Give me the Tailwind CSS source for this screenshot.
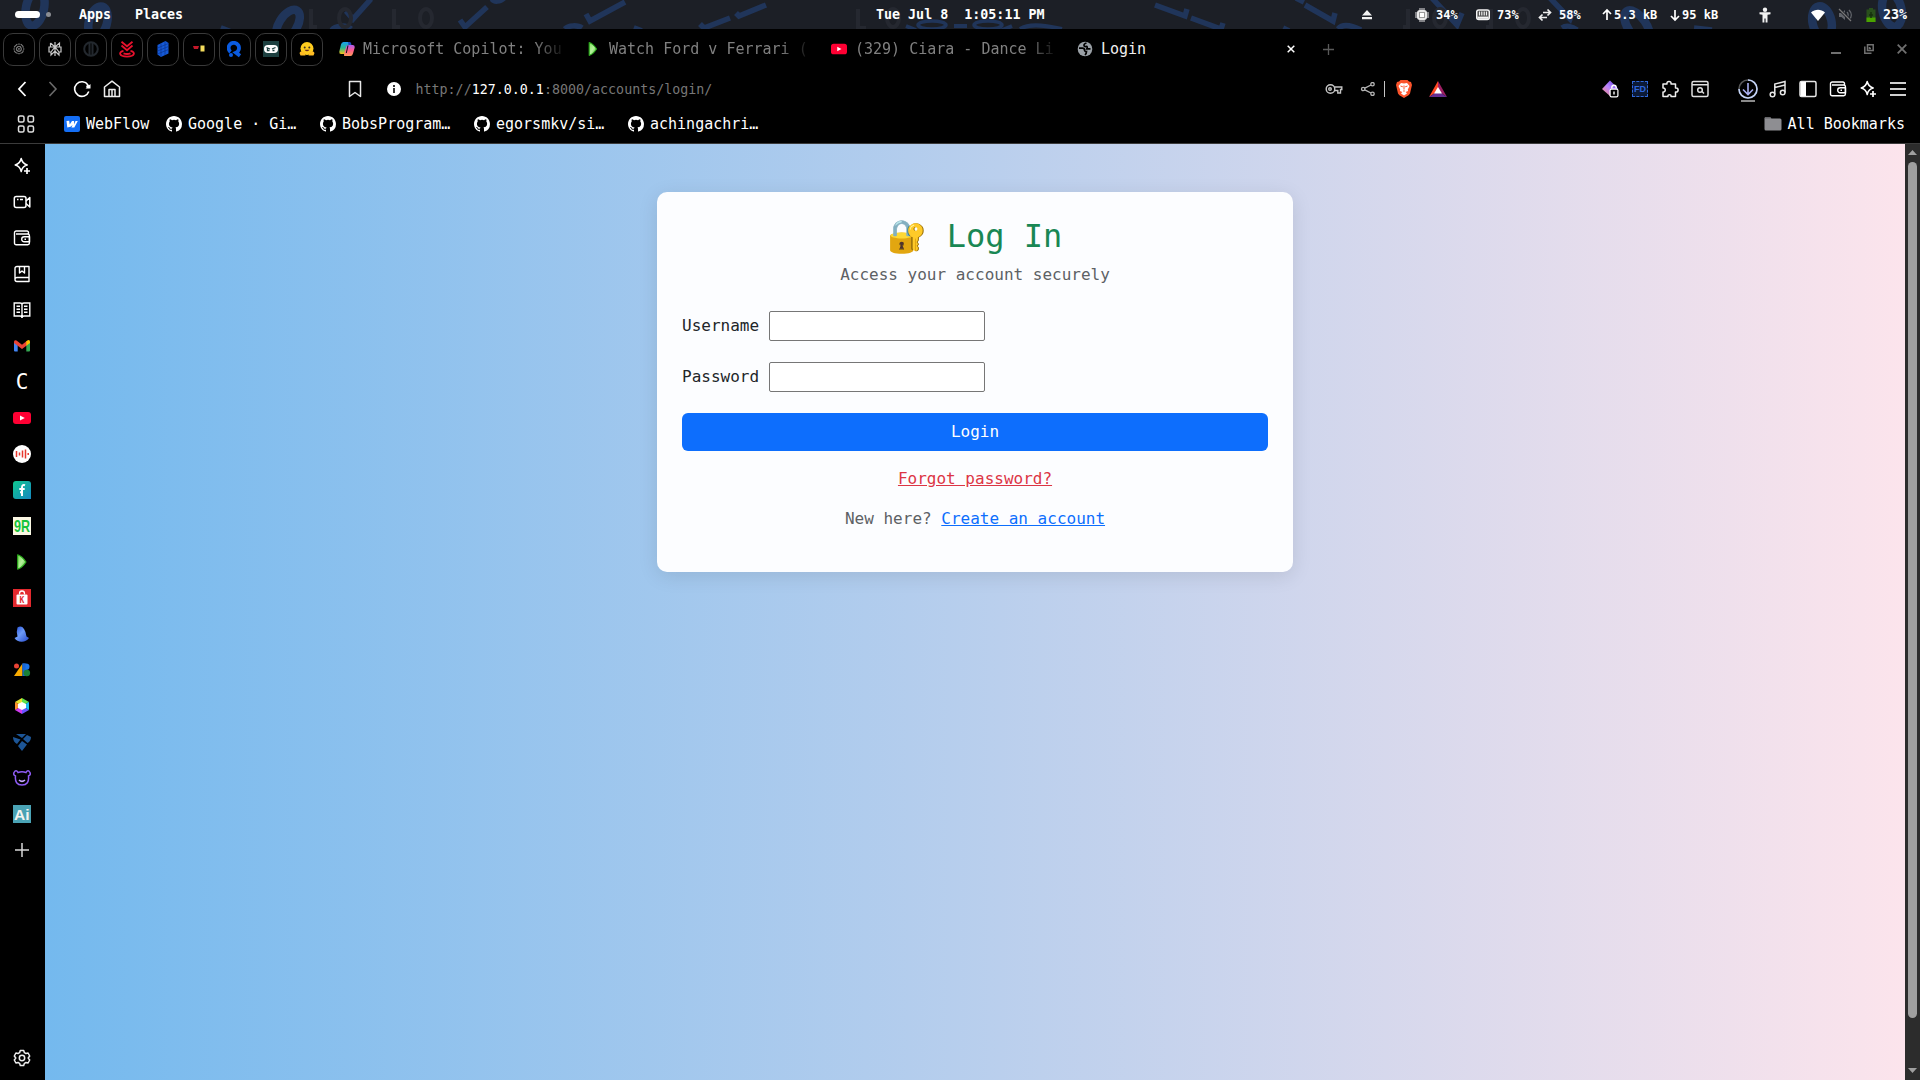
<!DOCTYPE html>
<html lang="en">
<head>
<meta charset="utf-8">
<title>Login</title>
<script src="https://cdn.jsdelivr.net/npm/@tailwindcss/browser@4"></script>
</head>
<body class="w-[1920px] h-[1080px] overflow-hidden bg-black text-white font-['DejaVu_Sans_Mono',monospace] flex flex-col">
<svg class="absolute w-0 h-0">
  <defs><linearGradient id="pg" x1="0" y1="0" x2="1" y2="1"><stop offset="0" stop-color="#7ee05a"/><stop offset=".5" stop-color="#b5f29c"/><stop offset="1" stop-color="#35b31c"/></linearGradient></defs>
  <symbol id="gh" viewBox="0 0 16 16"><path fill="#fff" d="M8 0C3.58 0 0 3.58 0 8c0 3.54 2.29 6.53 5.47 7.59.4.07.55-.17.55-.38 0-.19-.01-.82-.01-1.49-2.01.37-2.53-.49-2.69-.94-.09-.23-.48-.94-.82-1.13-.28-.15-.68-.52-.01-.53.63-.01 1.08.58 1.23.82.72 1.21 1.87.87 2.33.66.07-.52.28-.87.51-1.07-1.78-.2-3.64-.89-3.64-3.95 0-.87.31-1.59.82-2.15-.08-.2-.36-1.02.08-2.12 0 0 .67-.21 2.2.82a7.6 7.6 0 0 1 4 0c1.53-1.04 2.2-.82 2.2-.82.44 1.1.16 1.92.08 2.12.51.56.82 1.27.82 2.15 0 3.07-1.87 3.75-3.65 3.95.29.25.54.73.54 1.48 0 1.07-.01 1.93-.01 2.2 0 .21.15.46.55.38A8 8 0 0 0 16 8c0-4.42-3.58-8-8-8z"/></symbol>
  <symbol id="yt" viewBox="0 0 18 18"><rect y="3" width="18" height="12" rx="3" fill="#ff0033"/><path d="M7 6.4v5.2L11.800 9z" fill="#fff"/></symbol>
  <symbol id="play" viewBox="0 0 18 18"><path d="M4.700 1.800Q9 3 13 9Q9 15 4.700 16.200Z" fill="url(#pg)" stroke="#2aa81b" stroke-width="1.200" stroke-linejoin="round"/></symbol>
  <symbol id="spark" viewBox="0 0 18 18"><path d="M8.200 1.500c.8 3.900 2.200 5.500 6 6.500-3.800 1-5.200 2.600-6 6.500-.8-3.900-2.200-5.500-6-6.500 3.800-1 5.200-2.600 6-6.500z" fill="none" stroke="#fff" stroke-width="1.500" stroke-linejoin="round"/><path d="M14 11v6M11 14h6" stroke="#fff" stroke-width="1.700"/></symbol>
  <symbol id="wallet" viewBox="0 0 18 18"><g fill="none" stroke="#fff" stroke-width="1.400" stroke-linejoin="round"><path d="M15.500 5V3.500a1.500 1.500 0 0 0-1.500-1.500H3.200A1.700 1.700 0 0 0 1.500 3.700V14A1.700 1.700 0 0 0 3.200 15.800h11.500a1.700 1.700 0 0 0 1.700-1.700V6.800A1.700 1.700 0 0 0 14.700 5H3"/><path d="M16.500 7.800h-5.300a2.500 2.500 0 0 0 0 5h5.300z"/><path d="M11.500 10.300h1.500"/></g></symbol>
</svg>

<!-- desktop panel -->
<header class="relative h-[29px] shrink-0 bg-[#1c1f26] overflow-hidden text-[13.33px] font-bold">
  <svg class="absolute inset-0" width="1920" height="29" fill="none" stroke="#20355a">
    <g stroke-width="8.500">
      <ellipse cx="35" cy="8" rx="9" ry="18" transform="rotate(12 35 8)"/>
      <ellipse cx="98" cy="22" rx="9" ry="16" transform="rotate(16 98 22)"/>
      <ellipse cx="288" cy="25" rx="9" ry="17" transform="rotate(32 288 25)"/>
      <ellipse cx="1637" cy="26" rx="9" ry="18" transform="rotate(-35 1637 26)"/>
      <ellipse cx="1822" cy="22" rx="9.500" ry="16" transform="rotate(-12 1822 22)"/>
      <ellipse cx="1892" cy="10" rx="9.500" ry="17" transform="rotate(-12 1892 10)"/>
    </g>
    <g stroke-width="5.500">
      <path d="M346 11l7 8L371 -1M460 20l5 7L487 7M586 14l4 7L625 2M736 13l3 3L766 5M700 24l4 4L730 18"/>
      <path d="M1155 5l30 11 2-7M1191 18l30 11 2-6M1305 5l28 16 2-8M1296 -2l8 4M1432 -2l25 27 5-12M1550 -2l20 21 3-8"/>
      <path d="M332 30c3-5 15-5 19-1M565 29c3-4 13-4 17-1M492 -1c2 3 8 3 12-1M1338 29c5-6 15-3 23 1M1562 28c4-3 10-2 15 2M1283 28l6 3M1694 28l18 2"/>
      <path d="M906 26l10 4M954 26h13M1012 26l-12 5M1020 29c8-5 20-5 42 0M634 27l8 3M221 27l10 4" stroke-width="4"/>
      <ellipse cx="932" cy="25" rx="14" ry="4" stroke-width="3.500"/><ellipse cx="988" cy="25" rx="14" ry="4" stroke-width="3.500"/>
    </g>
    <g stroke="#252830" stroke-width="4">
      <path d="M311 9v18h6M394 9v18h6M858 9v19h8M1408 9v18h-5M1491 9v18h-5"/>
      <ellipse cx="345" cy="18" rx="6" ry="9"/><ellipse cx="426" cy="18" rx="6" ry="9"/><ellipse cx="893" cy="18" rx="6" ry="9"/><ellipse cx="1440" cy="18" rx="6" ry="9"/><ellipse cx="1523" cy="18" rx="6" ry="9"/>
    </g>
  </svg>
  <div class="relative h-full flex items-center">
    <div class="ml-[15px] w-[25px] h-[7px] rounded-full bg-white"></div>
    <div class="ml-[6px] w-[5px] h-[5px] rounded-full bg-[#8b8d93]"></div>
    <span class="ml-[28px] w-[56px]">Apps</span><span class="w-[741px]">Places</span>
    <span class="whitespace-pre w-[485px]">Tue Jul 8  1:05:11 PM</span>
    <svg class="shrink-0" width="12" height="12" viewBox="0 0 12 12" fill="#f2f2f2"><path d="M6 1l5 5.500H1zM1 8h10v2.200H1z"/></svg>
    <div class="ml-[42px] w-[61px] flex items-center gap-[7px] text-[12px] shrink-0">
      <svg width="14" height="14" viewBox="0 0 14 14"><rect x="2" y="2" width="10" height="10" rx="3" fill="#e8e8e8"/><path d="M5 0v14M7 0v14M9 0v14M0 5h14M0 7h14M0 9h14" stroke="#e8e8e8"/><rect x="4.500" y="4.500" width="5" height="5" fill="#fff" stroke="#999"/></svg><span>34%</span></div>
    <div class="w-[62px] flex items-center gap-[7px] text-[12px] shrink-0">
      <svg width="14" height="14" viewBox="0 0 14 14"><rect x=".7" y="2" width="12.600" height="9.500" rx="2" fill="#4a4a4a" stroke="#f4f4f4" stroke-width="1.500"/><path d="M3.500 3.500v4M5.800 3.500v4M8.200 3.500v4M10.500 3.500v4" stroke="#f0f0f0" stroke-width="1.200"/><path d="M1.500 9.700h11" stroke="#f4f4f4" stroke-width="2.200"/></svg><span>73%</span></div>
    <div class="w-[64px] flex items-center gap-[7px] text-[12px] shrink-0">
      <svg width="14" height="14" viewBox="0 0 14 14" fill="none" stroke="#eee" stroke-width="1.700"><path d="M5 4.500h7.500M9.500 1.500l3 3-3 3M9 9.500H1.500M4.500 6.500l-3 3 3 3"/></svg><span>58%</span></div>
    <div class="w-[68px] flex items-center gap-[2px] text-[12px] shrink-0">
      <svg width="10" height="14" viewBox="0 0 10 14" fill="none" stroke="#fff" stroke-width="1.700"><path d="M5 12V2M1 6l4-4 4 4"/></svg><span class="whitespace-nowrap">5.3 kB</span></div>
    <div class="w-[88px] flex items-center gap-[2px] text-[12px] shrink-0">
      <svg width="10" height="14" viewBox="0 0 10 14" fill="none" stroke="#fff" stroke-width="1.700"><path d="M5 2v10M1 8l4 4 4-4"/></svg><span class="whitespace-nowrap">95 kB</span></div>
    <svg class="shrink-0" width="14" height="16" viewBox="0 0 14 16" fill="#f2f2f2"><circle cx="7" cy="2.800" r="2.200"/><path d="M1.500 5.200h11v2L9.500 7.700V15.500H7.600V11.500H6.400V15.500H4.500V7.700L1.500 7.200z"/></svg>
    <svg class="ml-[39px] shrink-0" width="14" height="14" viewBox="0 0 14 14"><path d="M0 4.500C4 .8 10 .8 14 4.500L7 13z" fill="#fff"/></svg>
    <svg class="ml-[13px] shrink-0" width="14" height="14" viewBox="0 0 14 14"><path d="M1 5h2.500L7 2v10L3.500 9H1z" fill="#62656b"/><path d="M9 4c1.500 1.500 1.500 4.500 0 6M11 2c3 3 3 7 0 10" fill="none" stroke="#62656b" stroke-width="1.400"/><path d="M1 1l12 12" stroke="#1c1f26" stroke-width="3"/><path d="M1 1l12 12" stroke="#777" stroke-width="1.300"/></svg>
    <svg class="ml-[14px] shrink-0" width="10" height="14" viewBox="0 0 10 14"><path d="M3 0h4v1.500h2.500V14H.5V1.500H3z" fill="#29501c"/><path d="M.5 9.500h9V14h-9z" fill="#4aa300"/><path d="M5 4v6M3 7h4" stroke="#16300c" stroke-width="1.500"/></svg>
    <span class="ml-[7px]">23%</span>
  </div>
</header>

<!-- tab strip -->
<div class="h-[40px] shrink-0 flex items-center text-[15px] text-[#808080]">
  <div class="flex gap-[4px] pl-[3px]">
    <div class="w-8 h-[33px] rounded-[10px] border border-[#393939] flex items-center justify-center"><svg width="16" height="16" viewBox="0 0 16 16" stroke="#777" stroke-width="1.500" stroke-dasharray="1.200 1.200"><path d="M8 2.500v11M2.500 8h11M4.200 4.200l7.600 7.600M11.800 4.200l-7.600 7.600M5.500 3l5 10M10.500 3l-5 10M3 5.500l10 5M3 10.500l10-5"/></svg></div>
    <div class="w-8 h-[33px] rounded-[10px] border border-[#393939] flex items-center justify-center"><svg width="16" height="16" viewBox="0 0 16 16" fill="none" stroke="#c8c8c8" stroke-width="1.200"><path d="M8 1v14M3.500 2v4L8 6l4.500 0V2L8 6 3.500 2M2 6h12v5h-2v3L8 10l-4 4v-3H2zM4 11l4-5 4 5"/></svg></div>
    <div class="w-8 h-[33px] rounded-[10px] border border-[#393939] flex items-center justify-center"><svg width="16" height="16" viewBox="0 0 16 16" fill="none" stroke="#23282e" stroke-width="2"><circle cx="8" cy="8" r="6.800"/><path d="M6.500 1.500v13M9.500 1.500v13"/></svg></div>
    <div class="w-8 h-[33px] rounded-[10px] border border-[#393939] flex items-center justify-center"><svg width="16" height="17" viewBox="0 0 16 17" fill="none" stroke="#e8112d" stroke-width="1.800"><path d="M2.500 .8L8 5.300 13.500 .8M2.500 4.500L8 9.300l5.500-4.800"/><path d="M4.500 9.800C-.5 10.800-.5 15.600 8 15.600s8.500-4.800 3.500-5.800M4.500 12.300q3.500 1.400 7 0"/></svg></div>
    <div class="w-8 h-[33px] rounded-[10px] border border-[#393939] flex items-center justify-center"><svg width="16" height="18" viewBox="0 0 16 18"><path d="M10.500 1L13.500 3v10.500L6 17 2.500 14.500V5z" fill="#1559d6"/><path d="M2.500 8l11-4.500M2.500 11l11-4.500M2.500 14l11-4.500M6 3.500v13M10 1.500v13.500" stroke="#0a2f85" stroke-width=".6"/></svg></div>
    <div class="w-8 h-[33px] rounded-[10px] border border-[#393939] flex items-center justify-center"><svg width="16" height="16" viewBox="0 0 16 16"><path d="M2 5h6l-1 3H3z" fill="#c3182a"/><rect x="9.500" y="4.500" width="4" height="6" fill="#f4dc5c"/></svg></div>
    <div class="w-8 h-[33px] rounded-[10px] border border-[#393939] flex items-center justify-center"><svg width="16" height="17" viewBox="0 0 16 17"><path d="M3.500 11A5.200 5.200 0 1 1 9 11.700l4 3" fill="none" stroke="#0a5be0" stroke-width="3.800"/><circle cx="4" cy="14" r="2" fill="#0a5be0"/></svg></div>
    <div class="w-8 h-[33px] rounded-[10px] border border-[#393939] flex items-center justify-center"><svg width="16" height="16" viewBox="0 0 16 16"><path fill="#1d4040" d="M0 0h16v16H0z"/><rect x="1" y="4" width="14" height="8" rx="4" fill="#fff"/><path d="M3.500 6.500l3.500 1.500M12.500 6.500L9 8M4.500 7.500v2h2M9.500 9.500h2" fill="none" stroke="#1d4040" stroke-width="1.300"/></svg></div>
    <div class="w-8 h-[33px] rounded-[10px] border border-[#393939] flex items-center justify-center"><svg width="16" height="16" viewBox="0 0 16 16"><circle cx="8" cy="7.500" r="6.500" fill="#ffcc1f"/><path d="M.5 12q1-3 5-1l1 3.500H1.500zM15.500 12q-1-3-5-1l-1 3.500h5z" fill="#ffbc24"/><circle cx="5.700" cy="6.500" r="1" fill="#3b3020"/><circle cx="10.300" cy="6.500" r="1" fill="#3b3020"/><path d="M5.500 8.800q2.500 3 5 0z" fill="#6b2b22"/></svg></div>
  </div>
  <div class="ml-[16px] w-[246px] flex items-center gap-2">
    <svg class="shrink-0" width="16" height="16" viewBox="0 0 16 16"><defs><linearGradient id="ca" x2="0" y2="1"><stop stop-color="#1a9df0"/><stop offset=".5" stop-color="#2bb88c"/><stop offset="1" stop-color="#f5c518"/></linearGradient><linearGradient id="cb" x2="0" y2="1"><stop stop-color="#b05cf0"/><stop offset=".5" stop-color="#ff5e8a"/><stop offset="1" stop-color="#ff9a5a"/></linearGradient></defs><path d="M4.500 1h5.500q1.500 0 1 1.500L9 11q-.5 2-2.500 2H2Q0 13 .3 10.500L2 3.500Q2.500 1 4.500 1z" fill="url(#ca)"/><path d="M9.500 4H14q2 0 1.700 2.500L14 12.500Q13.300 15 11.500 15H6q-1.500 0-1-1.500L7 6q.5-2 2.500-2z" fill="url(#cb)"/><path d="M8.500 4.500L6.800 12h1L9.500 4.500z" fill="#111"/><path d="M9 1h2q1 0 1.500 3H9.500z" fill="#1c4cc0"/></svg>
    <span class="whitespace-nowrap [mask-image:linear-gradient(to_right,#000_86%,rgba(0,0,0,0.15))]">Microsoft Copilot: You</span></div>
  <div class="w-[246px] flex items-center gap-2"><svg class="shrink-0" width="16" height="16"><use href="#play"/></svg><span class="whitespace-nowrap [mask-image:linear-gradient(to_right,#000_86%,rgba(0,0,0,0.15))]">Watch Ford v Ferrari (</span></div>
  <div class="w-[246px] flex items-center gap-2"><svg class="shrink-0" width="16" height="16"><use href="#yt"/></svg><span class="whitespace-nowrap [mask-image:linear-gradient(to_right,#000_86%,rgba(0,0,0,0.15))]">(329) Ciara - Dance Li</span></div>
  <div class="w-[227px] flex items-center gap-2 text-[#f0f0f0]"><svg class="shrink-0" width="16" height="16" viewBox="0 0 16 16"><circle cx="8" cy="8" r="7.300" fill="#9aa0a6"/><path d="M2 7.200h3.500q2 0 2 1.700t2 1.600q0 2-1.500 3.500M9.500 2q-2.500.6-2.500 2.200t2 1.300.8 2.300h3.700" fill="none" stroke="#000" stroke-width="1.700"/></svg><span>Login</span>
    <svg class="ml-auto mr-[9px]" width="8" height="8" viewBox="0 0 8 8"><path d="M.7.700l6.600 6.600M7.300.700L.7 7.300" stroke="#fff" stroke-width="1.500"/></svg></div>
  <svg class="ml-[19px]" width="11" height="11" viewBox="0 0 11 11"><path d="M5.500 0v11M0 5.500h11" stroke="#5a5a5a" stroke-width="1.300"/></svg>
  <div class="ml-auto pr-[13px] flex items-center gap-[23px]">
    <svg width="10" height="10"><path d="M0 9h10" stroke="#707070" stroke-width="2"/></svg>
    <svg width="10" height="10" viewBox="0 0 10 10" fill="none" stroke="#707070" stroke-width="1.500"><path d="M3.500.8h5.700v5.700H3.500zM.8 2.500v6.700h6.700M5.500 3v1.500H7"/></svg>
    <svg width="10" height="10" viewBox="0 0 10 10"><path d="M.7.700l8.600 8.600M9.300.700L.7 9.300" stroke="#707070" stroke-width="1.800"/></svg>
  </div>
</div>

<!-- toolbar -->
<div class="h-[40px] shrink-0 flex items-center">
  <div class="flex items-center pl-[8px]">
    <svg class="mx-[6px]" width="18" height="18" viewBox="0 0 18 18"><path d="M11.500 2L5 9l6.500 7" fill="none" stroke="#fff" stroke-width="1.800"/></svg>
    <svg class="mx-[5px]" width="18" height="18" viewBox="0 0 18 18"><path d="M6.500 2L13 9l-6.500 7" fill="none" stroke="#6b6b6b" stroke-width="1.600"/></svg>
    <svg class="mx-[7px]" width="18" height="18" viewBox="0 0 18 18"><path d="M15 5A7.300 7.300 0 1 0 15.800 11.500" fill="none" stroke="#fff" stroke-width="1.600"/><path d="M17.500 4v4.500H12.500z" fill="#fff"/><circle cx="15" cy="6.500" r="1.700" fill="#fff"/></svg>
    <svg class="mx-[5px]" width="18" height="18" viewBox="0 0 18 18" fill="none" stroke="#ededed" stroke-width="1.500" stroke-linejoin="round"><path d="M1.500 7L9 1.200 16.500 7v9.500h-15z"/><path d="M6 16V9.500h6V16M9 9.500V16"/></svg>
  </div>
  <svg class="ml-[220px]" width="18" height="18" viewBox="0 0 18 18"><path d="M3.500 1.500h11v15L9 12.500l-5.500 4z" fill="none" stroke="#e8e8e8" stroke-width="1.500" stroke-linejoin="round"/></svg>
  <svg class="ml-[23px]" width="14" height="14" viewBox="0 0 14 14"><circle cx="7" cy="7" r="7" fill="#fff"/><path d="M7 3v2M7 6v5" stroke="#333" stroke-width="2"/></svg>
  <span class="ml-[14.5px] pt-[2px] text-[13.33px] text-[#777]">http://<span class="text-white">127.0.0.1</span>:8000/accounts/login/</span>
  <div class="ml-auto flex items-center">
    <svg class="w-[30px]" width="18" height="14" viewBox="0 0 18 14" fill="none" stroke="#c5c5c5" stroke-width="1.400"><circle cx="5.500" cy="7" r="4.300"/><circle cx="5" cy="7" r="1.300"/><path d="M9.500 5H16.800v2.500h-1.300V11h-2.700V8.500H9.500"/></svg>
    <svg class="ml-[4px] w-[30px]" width="14" height="14" viewBox="0 0 14 14" fill="none" stroke="#b5b5b5" stroke-width="1.300"><circle cx="2.200" cy="7" r="1.700"/><circle cx="11.500" cy="2.200" r="1.700"/><circle cx="11.500" cy="11.800" r="1.700"/><path d="M3.800 6.200L10 3M3.800 7.800L10 11"/></svg>
    <div class="ml-[1px] w-px h-4 bg-[#c5c5c5]"></div>
    <svg class="ml-[2px] w-[34px]" width="16" height="18" viewBox="0 0 16 18"><path d="M4.500 0h7l1.500 1.500L15 2l1 3-.5 2L14 13.500Q13.500 15 8 18 2.500 15 2 13.500L.5 7 0 5l1-3 2-.5z" fill="#fb542b"/><path d="M8 3.500L11 3l2.500 3-1.700 3.500.3 1.500-2.400 1L11 13.500 8 15.500 5 13.500 6.300 12l-2.400-1 .3-1.500L2.500 6 5 3z" fill="#fff"/><path d="M4.500 6l2.300.8M11.500 6l-2.300.8M7.200 11h1.600M8 5.500V9.500" stroke="#fb542b" stroke-width="1"/></svg>
    <svg class="w-[34px]" width="18" height="16" viewBox="0 0 18 16"><path d="M9 0L0 16l9-6z" fill="#ff4724"/><path d="M9 0l9 16-9-6z" fill="#9e1f63"/><path d="M0 16h18L9 10z" fill="#662d91"/><path d="M9 6l4 6.500H5z" fill="#fff"/></svg>
  </div>
  <div class="ml-[140px] flex items-center">
    <div class="w-[30px] flex justify-center"><svg width="18" height="18" viewBox="0 0 18 18"><defs><linearGradient id="pp" x1="1" x2="0" y2="1"><stop stop-color="#5b34e0"/><stop offset=".5" stop-color="#b784ff"/><stop offset="1" stop-color="#ff8b73"/></linearGradient></defs><path d="M9 .5l8 8-7.500 8L1 9z" fill="url(#pp)"/><rect x="8.500" y="8.500" width="9" height="9" rx="2" fill="#fff"/><rect x="9.700" y="9.700" width="6.600" height="6.600" rx=".8" fill="#000"/><path d="M10.800 8.500V7.500a2.200 2.200 0 0 1 4.400 0v1" fill="none" stroke="#fff" stroke-width="1.400"/><path d="M13 11.500v3" stroke="#fff" stroke-width="1.400"/></svg></div>
    <div class="w-[30px] flex justify-center"><div class="w-4 h-4 border border-dashed border-[#3068d8] bg-[#0c1a36] text-[9px] font-bold leading-[14px] text-center text-[#2e66dc] font-['Liberation_Sans',sans-serif]">FD</div></div>
    <div class="w-[30px] flex justify-center"><svg width="18" height="18" viewBox="0 0 18 18"><path d="M2 4h4c-.8-3.500 4.800-3.500 4 0h4.500v4c3.500-.8 3.500 4.800 0 4v4.500H10c.5-2.500-3.500-2.500-3 0H2V12c3 .5 3-4.500 0-4z" fill="none" stroke="#f0f0f0" stroke-width="1.500" stroke-linejoin="round"/></svg></div>
    <div class="w-[30px] flex justify-center"><svg width="18" height="18" viewBox="0 0 18 18" fill="none" stroke="#e0e0e0" stroke-width="1.500"><rect x="1" y="1.500" width="16" height="15" rx="1.500"/><path d="M1 4.700h16M11 11.500l2 2"/><circle cx="9" cy="10" r="2.300"/></svg></div>
  </div>
  <div class="ml-[18px] mr-[7px] flex items-center">
    <div class="relative w-[30px] flex justify-center"><svg width="20" height="20" viewBox="0 0 20 20" fill="none"><circle cx="10" cy="10" r="9" stroke="#555" stroke-width="1.600"/><path d="M10 1a9 9 0 1 1-9 9" stroke="#c3d3f7" stroke-width="1.600"/><path d="M10 4v11M5 10.500l5 5 5-5" stroke="#aab0f0" stroke-width="1.600"/></svg><div class="absolute -bottom-[3px] w-[14px] h-[2px] bg-[#8a8a8a]"></div></div>
    <div class="w-[30px] flex justify-center"><svg width="18" height="18" viewBox="0 0 18 18" fill="none" stroke="#e8e8e8" stroke-width="1.500"><circle cx="3.500" cy="14.500" r="2.300"/><circle cx="13.700" cy="12.500" r="2.300"/><path d="M5.800 14.500V4L16 1.500v11M5.800 7.500L16 5"/></svg></div>
    <div class="w-[30px] flex justify-center"><svg width="18" height="18" viewBox="0 0 18 18"><rect x="1" y="1.500" width="16" height="15" rx="1.500" fill="none" stroke="#e8e8e8" stroke-width="1.500"/><path d="M1.500 2H7v14H1.500z" fill="#fff"/></svg></div>
    <div class="w-[30px] flex justify-center"><svg width="18" height="18"><use href="#wallet"/></svg></div>
    <div class="w-[30px] flex justify-center"><svg width="18" height="18"><use href="#spark"/></svg></div>
    <div class="w-[30px] flex justify-center"><svg width="16" height="16"><path d="M0 2h16M0 8h16M0 14h16" stroke="#d0d0d0" stroke-width="2"/></svg></div>
  </div>
</div>

<!-- bookmarks -->
<div class="h-[35px] pb-[4px] shrink-0 flex items-center text-[15px] border-b border-[#3b3b3b]">
  <svg class="ml-[17px]" width="18" height="18" viewBox="0 0 18 18" fill="none" stroke="#dedede" stroke-width="1.500"><rect x="1.500" y="1" width="5.500" height="6" rx="1.500"/><rect x="11" y="1" width="5.500" height="6" rx="1.500"/><rect x="1.500" y="11" width="5.500" height="6" rx="1.500"/><rect x="11" y="11" width="5.500" height="6" rx="1.500"/></svg>
  <div class="ml-[29px] w-[102px] flex items-center gap-[6px]"><svg width="16" height="16" viewBox="0 0 16 16"><rect width="16" height="16" rx="2" fill="#146ef5"/><path d="M13.800 5L10.300 11.500H7.400l1.200-2.400Q7 11.300 3.300 11.500L2.500 5l2.700-.2.500 3.800L8 5l2-.1.300 3.600L11.500 5z" fill="#fff"/></svg>WebFlow</div>
  <div class="w-[154px] flex items-center gap-[6px]"><svg width="16" height="16"><use href="#gh"/></svg>Google · Gi…</div>
  <div class="w-[154px] flex items-center gap-[6px]"><svg width="16" height="16"><use href="#gh"/></svg>BobsProgram…</div>
  <div class="w-[154px] flex items-center gap-[6px]"><svg width="16" height="16"><use href="#gh"/></svg>egorsmkv/si…</div>
  <div class="flex items-center gap-[6px]"><svg width="16" height="16"><use href="#gh"/></svg>achingachri…</div>
  <div class="ml-auto mr-[15px] flex items-center gap-[6px]"><svg width="18" height="16" viewBox="0 0 18 16"><path d="M.5 2.500q0-1.500 1.500-1.500h4l1.500 1.500H16q1.500 0 1.500 1.500v9q0 1.500-1.500 1.500H2Q.5 14.500.5 13z" fill="#8e8e92"/><path d="M.5 2.500q0-1.500 1.500-1.500h4l1 1.500z" fill="#66666a"/></svg>All Bookmarks</div>
</div>

<div class="flex-1 min-h-0 flex">
  <!-- sidebar -->
  <nav class="w-[45px] shrink-0 flex flex-col pt-[4px] pb-[4px] pr-px">
    <div class="h-9 flex items-center justify-center"><svg width="18" height="18"><use href="#spark"/></svg></div>
    <div class="h-9 flex items-center justify-center"><svg width="18" height="18" viewBox="0 0 18 18" fill="none" stroke="#fff" stroke-width="1.500" stroke-linejoin="round"><rect x="1.300" y="3.500" width="11.700" height="11" rx="2"/><path d="M13 8l3.800-3.500v9.500L13 10.500M4 6.500h1.500M7 6.500h3"/></svg></div>
    <div class="h-9 flex items-center justify-center"><svg width="18" height="18"><use href="#wallet"/></svg></div>
    <div class="h-9 flex items-center justify-center"><svg width="18" height="18" viewBox="0 0 18 18" fill="none" stroke="#fff" stroke-width="1.400" stroke-linejoin="round"><path d="M16 12.500V1.500H4A2 2 0 0 0 2 3.500v11a2 2 0 0 0 2 2h12v-4H4a2 2 0 0 0-2 2M6.500 1.500V8L9 6l2.500 2V1.500"/></svg></div>
    <div class="h-9 flex items-center justify-center"><svg width="18" height="18" viewBox="0 0 18 18" fill="none" stroke="#fff" stroke-width="1.400"><path d="M1.200 2H7q2 0 2 1.500Q9 2 11 2h5.800v13H11q-2 0-2 2 0-2-2-2H1.200zM9 3v13M3.500 5.300H7M3.500 8.200H7M3.500 11.200H7M11 5.300h3.500M11 8.200h3.500M11 11.200h3.500"/></svg></div>
    <div class="h-9 flex items-center justify-center"><svg width="18" height="18" viewBox="0 0 18 18"><path d="M1 5v8.500q0 1 1 1h2.700V7z" fill="#4285f4"/><path d="M17 5v8.500q0 1-1 1h-2.700V7z" fill="#34a853"/><path d="M1 5q0-2.500 2.500-1.500L9 7.800l5-4v4.500L9 12 4.700 8.800 1 6z" fill="#ea4335"/><path d="M13.300 4.300Q17 1.500 17 5v1l-3.700 2.800z" fill="#fbbc04"/></svg></div>
    <div class="h-9 pt-[2px] flex items-center justify-center text-[21px]">C</div>
    <div class="h-9 flex items-center justify-center"><svg width="18" height="18"><use href="#yt"/></svg></div>
    <div class="h-9 flex items-center justify-center"><svg width="18" height="18" viewBox="0 0 18 18"><circle cx="9" cy="9" r="9" fill="#fff"/><path d="M3.500 6v6M6.500 7.500v3M9.500 5.500v7M12.500 4.500v9M15.200 8v2" stroke="#e8382f" stroke-width="1.500"/></svg></div>
    <div class="h-9 flex items-center justify-center"><svg width="18" height="18" viewBox="0 0 18 18"><defs><linearGradient id="fa" x2="1" y2="1"><stop stop-color="#10c98f"/><stop offset="1" stop-color="#1587c0"/></linearGradient></defs><path d="M3 0h12q3 0 3 3v15H3q-3 0-3-3V3q0-3 3-3z" fill="url(#fa)"/><path d="M12 4.300Q9 3.200 9 6.500V15M6.300 8h5.400M7 11.300h3" fill="none" stroke="#fff" stroke-width="2"/></svg></div>
    <div class="h-9 flex items-center justify-center"><div class="w-[18px] h-[18px] bg-[#fbf8e4] flex items-center justify-center"><svg width="18" height="18"><text x="1" y="15" font-family="Liberation Sans" font-size="17" font-weight="bold" fill="#17c43b" textLength="16" lengthAdjust="spacingAndGlyphs">9R</text></svg></div></div>
    <div class="h-9 flex items-center justify-center"><svg width="18" height="18"><use href="#play"/></svg></div>
    <div class="h-9 flex items-center justify-center"><svg width="18" height="18" viewBox="0 0 18 18"><path fill="#e3292e" d="M0 0h18v18H0z"/><rect x="3.500" y="5.500" width="11" height="10" rx="1" fill="#fff"/><path d="M6.500 5.500V4.500a2.500 2.500 0 0 1 5 0v1" fill="none" stroke="#fff" stroke-width="1.300"/><text x="9" y="13.500" text-anchor="middle" font-family="DejaVu Sans Mono" font-size="8" font-weight="bold" fill="#e3292e">K</text></svg></div>
    <div class="h-9 flex items-center justify-center"><svg width="18" height="18" viewBox="0 0 18 18"><defs><linearGradient id="bl" x2="1" y2="1"><stop stop-color="#1d49d8"/><stop offset=".45" stop-color="#6d9bf8"/><stop offset="1" stop-color="#2447cc"/></linearGradient></defs><path d="M4.500 2.500Q8.500 0 11 4q2 3 2.500 7.500l2.500 1.500q-3 4-7.500 3.800Q4 16.800 1.500 13l3-1.500Q3 7 4.500 2.500z" fill="url(#bl)"/></svg></div>
    <div class="h-9 flex items-center justify-center"><svg width="18" height="18" viewBox="0 0 18 18"><circle cx="3.500" cy="5" r="2.500" fill="#ea4335"/><path d="M9.500 2.500v12.500H1z" fill="#f9ab00"/><path d="M9.500 2.500h3.500q3.500 0 3.500 3.200T13 9H9.500z" fill="#1a73e8"/><path d="M9.500 2.500v12.500h3V2.500z" fill="#1967d2"/><circle cx="13.800" cy="12" r="3.300" fill="#188038"/></svg></div>
    <div class="h-9 flex items-center justify-center"><svg width="18" height="18" viewBox="0 0 18 18"><path d="M9 1l7 4-7 4z" fill="#5ee04a"/><path d="M9 1L2 5l7 4z" fill="#e8e32c"/><path d="M2 5v8l7-4z" fill="#ff922e"/><path d="M2 13l7 4V9z" fill="#d13cf0"/><path d="M9 17l7-4-7-4z" fill="#6b52ff"/><path d="M16 5v8L9 9z" fill="#19bdf2"/><path d="M9 5l4 2v4l-4 2-4-2V7z" fill="#fff"/></svg></div>
    <div class="h-9 flex items-center justify-center"><svg width="18" height="18" viewBox="0 0 18 18" fill="#1c5596"><path d="M3 1h10L9 5zM14 2l4 2q0 4-3.500 6L10 6zM0 4l7.500 2.500L4 11Q0 9 0 4zM9 8l5 3.500L9 18l-4-5z"/></svg></div>
    <div class="h-9 flex items-center justify-center"><svg width="18" height="18" viewBox="0 0 18 18" fill="none" stroke="#8f5cf5" stroke-width="1.500"><path d="M5 3.500Q3-.2 1 3.500 0 6 2.500 7 1.500 16 9 16T15.500 7Q18 6 17 3.500 15-.2 13 3.500 9 2 5 3.500z"/><path d="M6 11q3 2.800 6 0" stroke="#c7a8ff"/></svg></div>
    <div class="h-9 flex items-center justify-center"><svg width="18" height="18" viewBox="0 0 18 18"><path fill="#4aa3b5" d="M0 0h18v18H0z"/><text x="1" y="14.500" font-family="Liberation Sans" font-size="15" font-weight="bold" fill="#f4f4f0" textLength="15.500" lengthAdjust="spacingAndGlyphs">Ai</text></svg></div>
    <div class="h-9 flex items-center justify-center"><svg width="14" height="14"><path d="M7 0v14M0 7h14" stroke="#d8d8d8" stroke-width="1.500"/></svg></div>
    <div class="mt-auto h-9 flex items-center justify-center"><svg width="18" height="18" viewBox="0 0 18 18" fill="none" stroke="#eee" stroke-width="1.500" stroke-linejoin="round"><path d="M7.300 1.500h3.400l.7 2.200 1.500.8 2.200-.5 1.600 3-1.500 2 1.500 2-1.600 3-2.200-.5-1.500.8-.7 2.200H7.300l-.7-2.200-1.500-.8-2.200.5-1.600-3 1.500-2-1.500-2 1.600-3 2.200.5 1.500-.8z"/><circle cx="9" cy="9" r="2.700"/></svg></div>
  </nav>

  <!-- page -->
  <main class="flex-1 pt-12 bg-[linear-gradient(to_right,#74b9ee,#fce4ec)] text-[16px] leading-6 text-[#212529]">
    <section class="mx-auto w-[636px] h-[380px] rounded-[10px] bg-[#fcfdff] p-[25px] shadow-[0_4px_20px_rgba(0,0,0,0.1)]">
      <h2 class="text-[32px] leading-[38px] mb-2 text-center text-[#198754]"><span class="font-['Noto_Color_Emoji']">🔐</span> Log In</h2>
      <p class="text-center text-[#5d6165] mb-6">Access your account securely</p>
      <form>
        <div class="flex items-center mb-[21px]"><label class="w-[87px]">Username</label><input class="w-[216px] h-[30px] bg-white border border-[#767676] rounded-[2px]"></div>
        <div class="flex items-center mb-[21px]"><label class="w-[87px]">Password</label><input type="password" class="w-[216px] h-[30px] bg-white border border-[#767676] rounded-[2px]"></div>
        <button type="button" class="block w-full h-[38px] rounded-[6px] bg-[#0d6efd] text-white">Login</button>
      </form>
      <p class="mt-4 text-center"><a class="underline text-[#dc3545]">Forgot password?</a></p>
      <p class="mt-4 text-center text-[#5d6165]">New here? <a class="underline text-[#0d6efd]">Create an account</a></p>
    </section>
  </main>

  <!-- scrollbar -->
  <div class="w-[15px] shrink-0 bg-[#2c2c2c] flex flex-col items-center pt-[6px] pb-[7px]">
    <svg width="9" height="5"><path d="M4.500 0L9 5H0z" fill="#9f9f9f"/></svg>
    <div class="mt-[7px] w-[9px] h-[856px] rounded-full bg-[#9f9f9f]"></div>
    <svg class="mt-auto" width="9" height="5"><path d="M4.500 5L9 0H0z" fill="#9f9f9f"/></svg>
  </div>
</div>
</body>
</html>
